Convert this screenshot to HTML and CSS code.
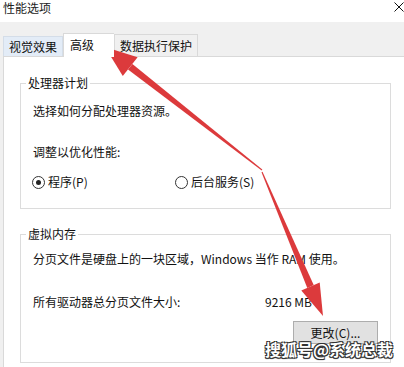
FILE: index.html
```html
<!DOCTYPE html>
<html lang="zh-CN">

<head>
    <meta charset="UTF-8">
    <meta name="viewport" content="width=device-width, initial-scale=1.0">
    <title>性能选项</title>
    <link rel="stylesheet" href="styles.css">
</head>

<body>

    <div class="window">
        <header class="titlebar">
            <span class="title">性能选项</span>
            <svg class="close" width="10" height="10" viewBox="0 0 10 10">
                <path d="M0.5 0.5 L9.5 9.5 M9.5 0.5 L0.5 9.5" stroke="#111" stroke-width="1" fill="none" />
            </svg>
        </header>

        <div class="dialog">
            <!-- pestañas -->
            <nav class="tabs">
                <span class="tab tab-hover">视觉效果</span>
                <span class="tab tab-active">高级</span>
                <span class="tab">数据执行保护</span>
            </nav>

            <main class="panel">
                <fieldset class="group group-cpu">
                    <legend>处理器计划</legend>
                    <p class="line first">选择如何分配处理器资源。</p>
                    <p class="line second">调整以优化性能:</p>
                    <div class="radios">
                        <label class="radio"><span class="dot checked"></span>程序(P)</label>
                        <label class="radio"><span class="dot"></span>后台服务(S)</label>
                    </div>
                </fieldset>

                <fieldset class="group group-mem">
                    <legend>虚拟内存</legend>
                    <p class="line first">分页文件是硬盘上的一块区域，Windows 当作 RAM 使用。</p>
                    <div class="size-row">
                        <span>所有驱动器总分页文件大小:</span>
                        <span>9216 MB</span>
                    </div>
                    <div class="actions">
                        <button type="button">更改(C)...</button>
                    </div>
                </fieldset>
            </main>
        </div>

        <!-- flechas rojas encima -->
        <svg class="arrows" width="404" height="367" viewBox="0 0 404 367">
            <polygon points="262.3,169.6 261.7,170.4 128.0,69.5 132.4,63.9" fill="#dc3a3c" />
            <polygon points="105,47 137.6,57.3 122.8,76.1" fill="#dc3a3c" />
            <polygon points="262.5,171.8 261.5,172.2 307.3,287.9 313.7,285.1" fill="#dc3a3c" />
            <polygon points="323,316 319.7,282.6 301.3,290.4" fill="#dc3a3c" />
        </svg>

        <div class="watermark">搜狐号@系统总裁</div>
    </div>

</body>

</html>
```

FILE: styles.css
```css
body {
    margin: 0;
    padding: 0;
    background-color: white;
    font-family: "Noto Sans CJK SC", "Microsoft YaHei", sans-serif;
    font-size: 12px;
    color: #111;
}

.window {
    position: relative;
    width: 404px;
    height: 367px;
    overflow: hidden;
}

.titlebar {
    height: 22px;
    display: flex;
    justify-content: space-between;
    align-items: flex-start;
    padding: 0 0 0 3px;
    box-sizing: border-box;
}

.title {
    line-height: 16px;
    color: #222;
}

.close {
    margin-top: 2px;
    margin-right: 0;
}

.dialog {
    background-color: #f0f0f0;
    padding: 11px 0 0 3px;
    height: 345px;
    box-sizing: border-box;
}

.tabs {
    display: flex;
    align-items: flex-end;
    height: 23px;
}

.tab {
    border: 1px solid #d9d9d9;
    border-bottom: none;
    height: 22px;
    line-height: 22px;
    padding: 0 5px;
    box-sizing: border-box;
    background-color: #f0f0f0;
    position: relative;
}

.tab-hover {
    height: 20px;
    line-height: 20px;
    width: 60px;
    background-color: #e3ecf7;
    border-color: #d4dde8;
}

.tab-active {
    height: 24px;
    line-height: 21px;
    width: 51px;
    padding-left: 6px;
    margin-bottom: -1px;
    background-color: white;
    z-index: 1;
    border-right: none;
}

.panel {
    background-color: white;
    border-top: 1px solid #d9d9d9;
    border-left: 1px solid #d9d9d9;
    padding: 0 0 0 16px;
    height: 400px;
}

.group {
    margin: 0;
    width: 371px;
    box-sizing: border-box;
    border: 1px solid #dcdcdc;
    padding: 0 12px;
    min-width: 0;
}

.group legend {
    padding: 0 2px;
    margin-left: -7px;
    line-height: 16px;
    color: #111;
}

.group-cpu {
    margin-top: 18px;
    padding-bottom: 18px;
}

.group-mem {
    margin-top: 17px;
    padding-bottom: 18px;
}

.line {
    margin: 0;
    line-height: 16px;
}

.group-cpu .first {
    margin-top: 12px;
}

.group-cpu .second {
    margin-top: 25px;
}

.group-mem .first {
    margin-top: 9px;
}

.radios {
    display: grid;
    grid-template-columns: 143px auto;
    margin-top: 14px;
    margin-left: -1px;
    line-height: 16px;
}

.radio {
    display: flex;
    align-items: center;
    gap: 3px;
}

.dot {
    width: 13px;
    height: 13px;
    box-sizing: border-box;
    border: 1px solid #333;
    border-radius: 50%;
    background-color: white;
    display: flex;
    align-items: center;
    justify-content: center;
}

.dot.checked::after {
    content: "";
    width: 5px;
    height: 5px;
    border-radius: 50%;
    background-color: #222;
}

.size-row {
    display: grid;
    grid-template-columns: 232px auto;
    margin-top: 27px;
    line-height: 16px;
}

.actions {
    display: flex;
    justify-content: flex-end;
    margin-top: 11px;
}

button {
    width: 85px;
    height: 23px;
    background-color: #e1e1e1;
    border: 1px solid #adadad;
    font-family: inherit;
    font-size: 12px;
    color: #111;
    padding: 0;
}

.arrows {
    position: absolute;
    top: 0;
    left: 0;
    pointer-events: none;
}

.watermark {
    position: absolute;
    left: 265px;
    top: 337px;
    font-size: 16px;
    font-weight: bold;
    color: white;
    letter-spacing: 0;
    text-shadow: 1px 1px 0 #333, -1px -1px 0 #333, 1px -1px 0 #333, -1px 1px 0 #333, 0 1px 1px #222;
}
```
